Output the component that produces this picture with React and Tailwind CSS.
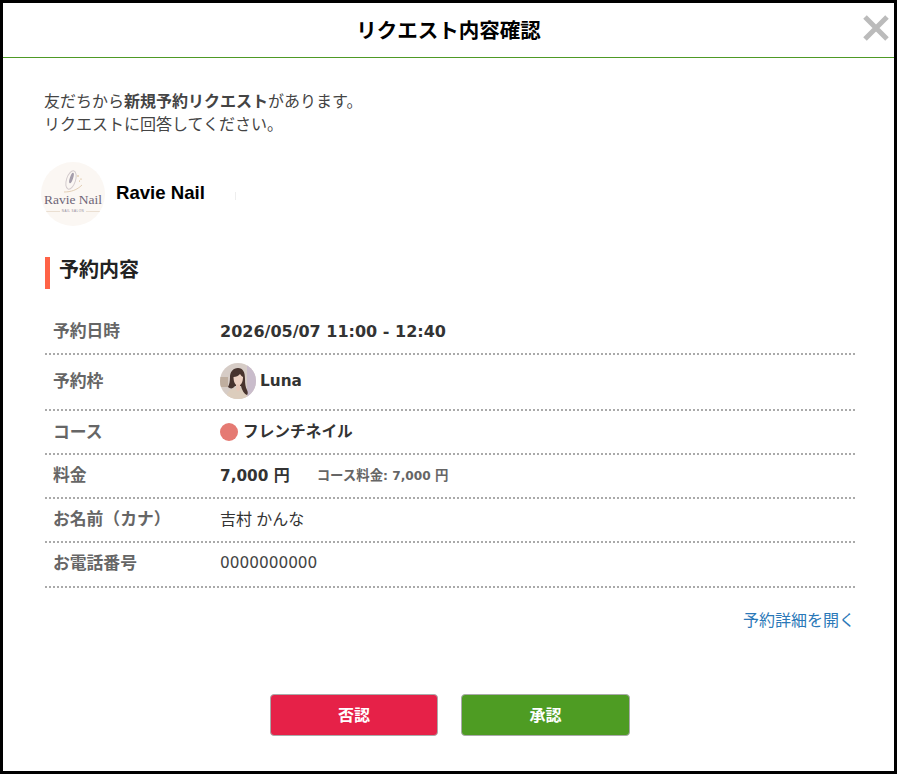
const jp = 'font-["Open_Sans","Noto_Sans_CJK_JP",sans-serif]';
const latin = 'font-["DejaVu_Sans",sans-serif] text-[15.3px]';

function Logo() {
  return (
    <div className="w-[64px] h-[64px] shrink-0 rounded-full bg-[#fbf7f3] flex flex-col items-center overflow-hidden">
      <svg viewBox="0 0 64 24" className="w-[64px] h-[24px] mt-[7px] shrink-0" fill="none">
        <ellipse cx="30" cy="11" rx="4.500" ry="9.500" transform="rotate(18 30 11)" stroke="#d3cbcd" strokeWidth="1" />
        <ellipse cx="30.500" cy="9" rx="1.600" ry="5.500" transform="rotate(18 30.500 9)" fill="#a49dab" />
        <path d="M23 23c7 0 13-2 18-7" stroke="#dcc4a6" strokeWidth="0.8" />
        <circle cx="37" cy="7" r="0.7" fill="#c9a470" />
        <circle cx="40" cy="10" r="0.6" fill="#c9a470" />
        <circle cx="38.500" cy="12" r="0.5" fill="#c9a470" />
      </svg>
      <div className='font-["Liberation_Serif",serif] text-[13.5px] leading-[14px] text-[#6e6577] whitespace-nowrap'>Ravie Nail</div>
      <div className="flex items-center gap-[2px] mt-[2px]">
        <span className="w-[14px] h-px bg-[#eadfd2]" />
        <span className='font-["Liberation_Sans",sans-serif] text-[3px] leading-[4px] text-[#8f8798] tracking-[0.5px]'>NAIL SALON</span>
        <span className="w-[14px] h-px bg-[#eadfd2]" />
      </div>
    </div>
  );
}

function Avatar() {
  return (
    <svg viewBox="0 0 36 36" className="w-[36px] h-[36px] rounded-full shrink-0">
      <rect width="36" height="36" fill="#d6ccc6" />
      <rect x="27" width="9" height="36" fill="#c9bccb" />
      <rect x="0" y="14" width="8" height="10" fill="#bfae9f" />
      <path d="M6 36c0-7 5-11 11-11s10 4 11 11z" fill="#dccdbd" />
      <path d="M18 5c-5 0-8 4-8 9 0 4-.5 7-2 10 2 2 5 2 7-1h6c1 4 3 8 6 9 1-1 1-3 0-5-1.500-3-2-6-2-11C25 9 23 5 18 5z" fill="#47332e" />
      <path d="M13.500 14c2.500 0 5-1 6.500-3 1 1.500 2 2.500 3 3 0 5-2 8.500-4.800 8.500s-4.700-3.500-4.700-8.500z" fill="#ecd0c2" />
      <path d="M16 21.500h4v5l-2 2-2-2z" fill="#e6c7b8" />
    </svg>
  );
}

function Row({ label, className, children }) {
  return (
    <div className={"flex items-center border-b-2 border-dotted border-[#aaaaaa] " + className}>
      <div className="w-[175px] pl-[8px] shrink-0 text-[16.8px] font-bold text-[#666666] whitespace-nowrap">{label}</div>
      <div className="flex items-center min-w-0 text-[#333333] text-[16px]">{children}</div>
    </div>
  );
}

export default function App() {
  return (
    <div className={"w-[897px] h-[774px] border-[3px] border-black bg-white flex flex-col overflow-hidden text-[#333333] " + jp}>
      <header className="relative h-[55px] shrink-0 border-b border-[#4e9a25] flex items-center justify-center">
        <h1 className="text-[20.5px] font-bold text-black mt-[1px]">リクエスト内容確認</h1>
        <svg viewBox="0 0 28 28" className="absolute right-[4px] top-[11px] w-[28px] h-[28px]" aria-label="閉じる">
          <path d="M3 3l22 22M25 3L3 25" stroke="#bbbbbb" strokeWidth="5" />
        </svg>
      </header>

      <main className="flex-1 flex flex-col pl-[42px] pr-[39px]">
        <p className="mt-[32px] -ml-[1px] text-[16px] leading-[23px] text-[#444444]">
          友だちから<b className="font-bold">新規予約リクエスト</b>があります。<br />
          リクエストに回答してください。
        </p>

        <div className="flex items-center mt-[26px] -ml-[4px] gap-[11px]">
          <Logo />
          <span className='font-["Liberation_Sans",sans-serif] font-bold text-[18.6px] text-black mb-[3px]'>Ravie Nail</span>
          <span className="w-px h-[8px] bg-[#eeeeee] ml-[19px] mt-[3px]" />
        </div>

        <h2 className="mt-[31px] h-[32px] border-l-[5px] border-[#ff6347] pl-[9px] text-[20px] font-bold text-[#222222] leading-[25px]">予約内容</h2>

        <div className="mt-[20px] flex flex-col">
          <Row label="予約日時" className="h-[46px]">
            <span className='font-bold font-["DejaVu_Sans",sans-serif] text-[16px] mt-[1px]'>2026/05/07 11:00 - 12:40</span>
          </Row>
          <Row label="予約枠" className="h-[56px] pb-[2px]">
            <Avatar />
            <span className={"font-bold ml-[4px] " + latin}>Luna</span>
          </Row>
          <Row label="コース" className="h-[44px]">
            <span className="w-[18px] h-[18px] rounded-full bg-[#e57a73] shrink-0" />
            <span className="font-bold ml-[5px] text-[15.7px]">フレンチネイル</span>
          </Row>
          <Row label="料金" className="h-[44px] pb-[2px]">
            <span className="font-bold"><span className={latin}>7,000 </span>円</span>
            <span className="ml-[27px] text-[13.4px] font-bold text-[#666666]">コース料金<span className='font-["DejaVu_Sans",sans-serif] text-[12.2px]'>: 7,000 </span>円</span>
          </Row>
          <Row label="お名前（カナ）" className="h-[44px] pb-[2px]">
            <span>吉村 かんな</span>
          </Row>
          <Row label="お電話番号" className="h-[45px] pb-[3px]">
            <span className={"text-[#444444] " + latin}>0000000000</span>
          </Row>
        </div>

        <div className="mt-[20px] text-right">
          <a href="#" className="text-[16px] text-[#2a78b8]">予約詳細を開く</a>
        </div>

        <div className="mt-[62px] flex justify-center gap-[23px]">
          <button className="w-[168px] h-[42px] rounded-[4px] border border-[#aaaaaa] bg-[#e62148] text-white font-bold text-[16px]">否認</button>
          <button className="w-[169px] h-[42px] rounded-[4px] border border-[#aaaaaa] bg-[#4e9c23] text-white font-bold text-[16px]">承認</button>
        </div>
      </main>
    </div>
  );
}
